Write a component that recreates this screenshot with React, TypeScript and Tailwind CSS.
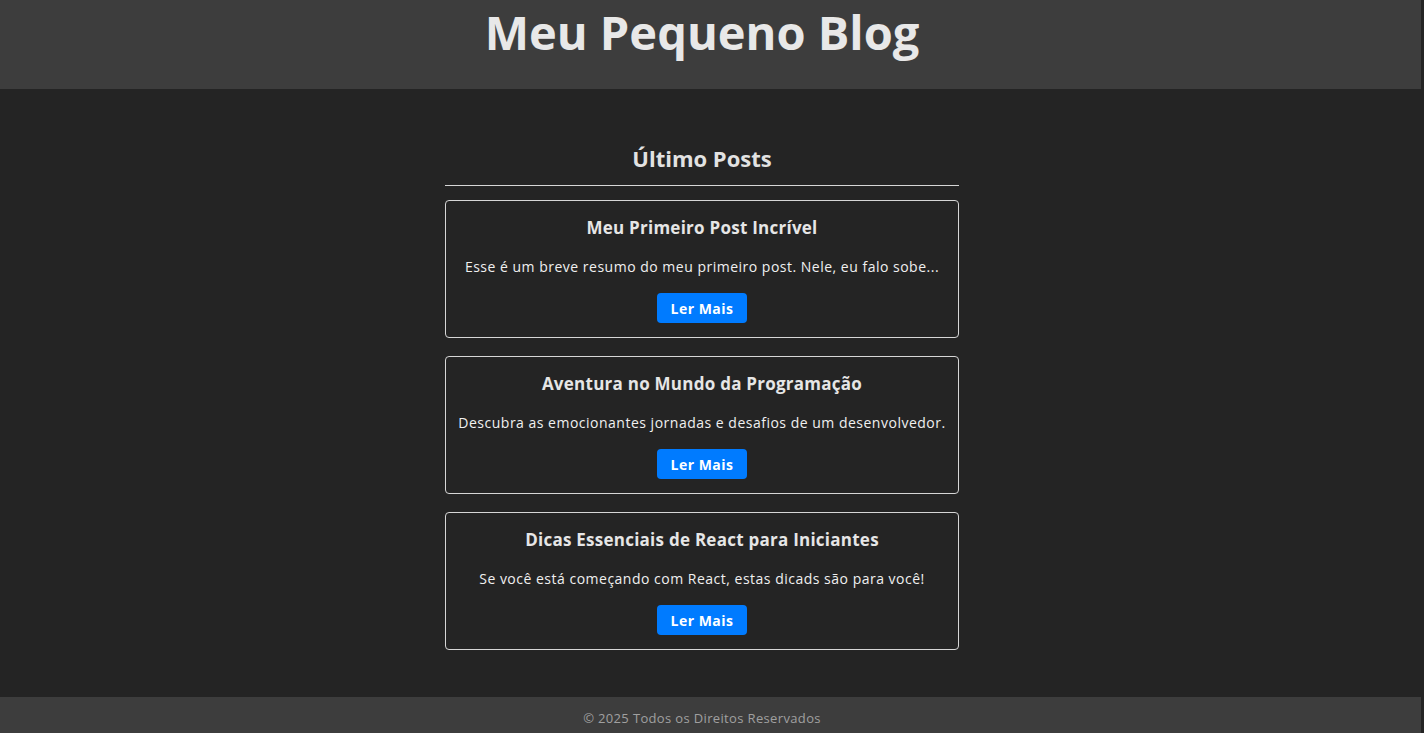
const posts = [
  {
    title: "Meu Primeiro Post Incrível",
    summary: "Esse é um breve resumo do meu primeiro post. Nele, eu falo sobe...",
  },
  {
    title: "Aventura no Mundo da Programação",
    summary: "Descubra as emocionantes jornadas e desafios de um desenvolvedor.",
  },
  {
    title: "Dicas Essenciais de React para Iniciantes",
    summary: "Se você está começando com React, estas dicads são para você!",
  },
];

function PostCard({ title, summary }: { title: string; summary: string }) {
  return (
    <article className="flex h-[138px] flex-col items-center rounded-[4px] border border-[#d6d6d6] px-[10px] pt-[15px] pb-[14px] text-center">
      <h3 className="text-[17px] leading-[23px] font-bold tracking-[0.25px] text-[#e6e6e6]">{title}</h3>
      <p className="mt-[18px] whitespace-nowrap text-[14px] leading-[19px] tracking-[0.5px] text-[#f0f0f0]">{summary}</p>
      <button className="mt-[17px] h-[30px] w-[90px] rounded-[4px] bg-[#007bff] text-[14px] font-bold tracking-[0.5px] text-white">
        Ler Mais
      </button>
    </article>
  );
}

export default function App() {
  return (
    <div
      className="flex min-h-screen flex-col bg-[#242424]"
      style={{ fontFamily: '"Open Sans", "Noto Sans", sans-serif' }}
    >
      {/* Header */}
      <header className="h-[89px] border-r-[3px] border-[#242424] bg-[#3d3d3d] pr-[17px] text-center">
        <h1 className="text-[47px] leading-[64px] font-bold text-[#e8e8e8]">Meu Pequeno Blog</h1>
      </header>

      {/* Main */}
      <main className="flex-1 pr-[20px] pt-[54px] pb-[45px]">
        <section className="mx-auto w-[514px]">
          <h2 className="border-b border-[#d6d6d6] pb-[12px] text-center text-[22px] leading-[30px] font-bold text-[#e2e2e2]">
            Último Posts
          </h2>
          <div className="mt-[14px] flex flex-col gap-[18px]">
            {posts.map((p) => (
              <PostCard key={p.title} title={p.title} summary={p.summary} />
            ))}
          </div>
        </section>
      </main>

      {/* Footer */}
      <footer className="h-[36px] border-r-[3px] border-[#242424] bg-[#3d3d3d] pr-[17px] pt-[12px] text-center text-[13px] leading-[18px] tracking-[0.35px] text-[#a0a0a0]">
        © 2025 Todos os Direitos Reservados
      </footer>
    </div>
  );
}
